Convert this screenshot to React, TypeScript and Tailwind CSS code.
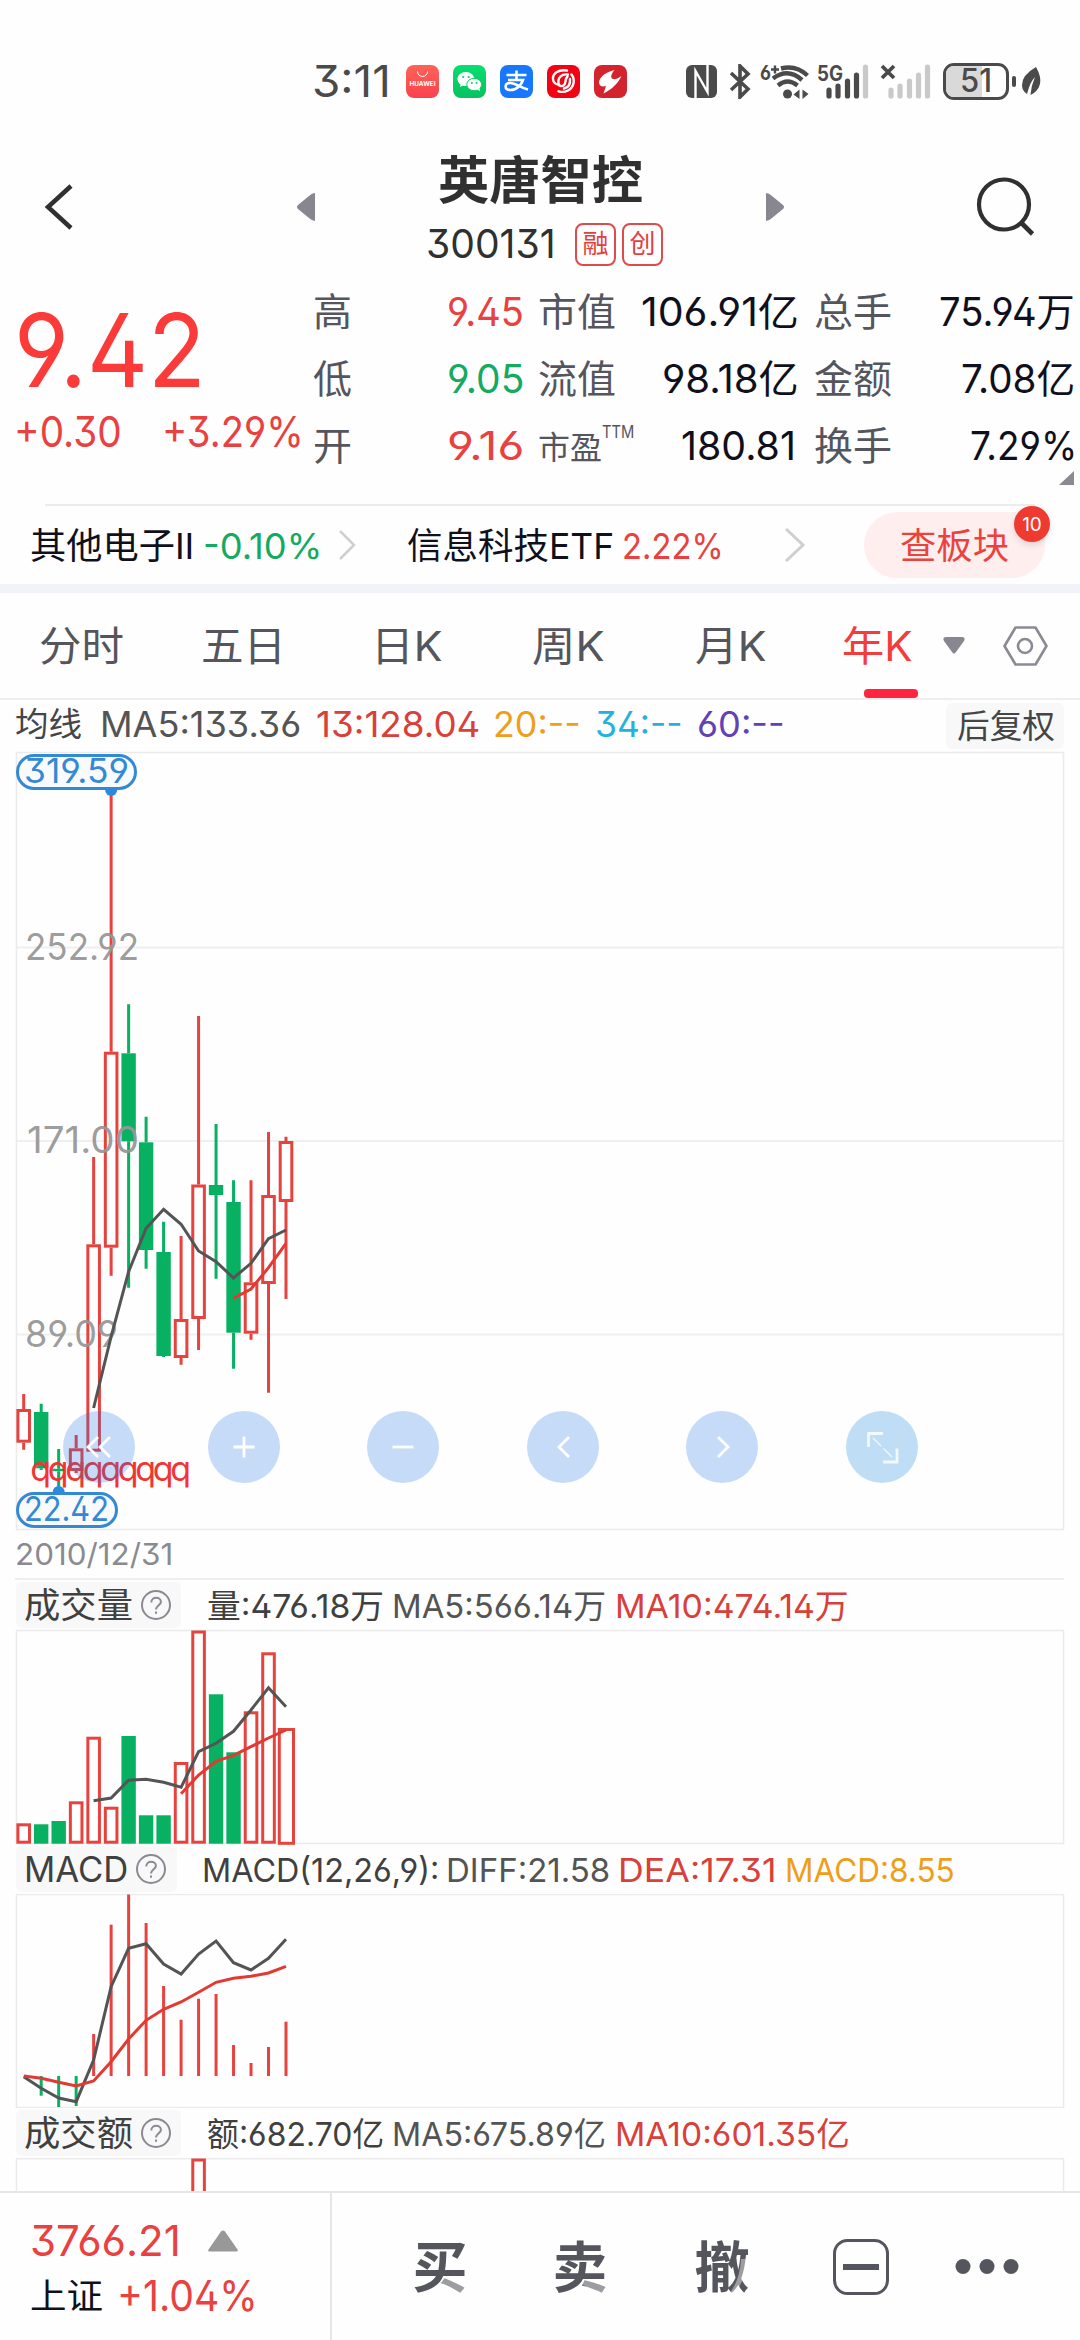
import { useLayoutEffect, useRef, useState } from "react";
import type { ReactNode } from "react";
import clsx from "clsx";

/* ---- Text that fills the width of its box ---- */

function Fit({ children, className }: { children: ReactNode; className?: string }) {
  const box = useRef<HTMLSpanElement>(null);
  const inner = useRef<HTMLSpanElement>(null);
  const [scale, setScale] = useState(1);

  useLayoutEffect(() => {
    if (!box.current || !inner.current) return;
    setScale(box.current.clientWidth / inner.current.offsetWidth);
  }, [children]);

  return (
    <span ref={box} className={clsx("block shrink-0", className)}>
      <span
        ref={inner}
        className="inline-block origin-left whitespace-nowrap align-top"
        style={{ transform: `scaleX(${scale})` }}
      >
        {children}
      </span>
    </span>
  );
}

/* ---- Chart data (one entry per year) ---- */

const RED = "#e6433f";
const GREEN = "#08b062";
const DARK = "#545454";

const cx = (i: number) => 23.7 + i * 17.487;

const line = (ys: number[], start: number) =>
  ys.map((y, i) => `${cx(start + i).toFixed(1)},${y}`).join(" ");

type Candle = { up: boolean; high: number; top: number; bottom: number; low: number };

const CANDLES: Candle[] = [
  { up: true, high: 1394, top: 1409, bottom: 1442.7, low: 1449.7 },
  { up: false, high: 1403.7, top: 1412, bottom: 1468.3, low: 1470 },
  { up: false, high: 1449, top: 1468.8, bottom: 1471.2, low: 1490 },
  { up: true, high: 1435, top: 1448.3, bottom: 1471, low: 1473 },
  { up: true, high: 1157, top: 1244.3, bottom: 1451.7, low: 1451.7 },
  { up: true, high: 788, top: 1051.7, bottom: 1247.7, low: 1275.7 },
  { up: false, high: 1004.3, top: 1053.3, bottom: 1141.3, low: 1287.7 },
  { up: false, high: 1116.7, top: 1142.3, bottom: 1250, low: 1268.7 },
  { up: false, high: 1221.7, top: 1252, bottom: 1356, low: 1357 },
  { up: true, high: 1236, top: 1319, bottom: 1358, low: 1364.7 },
  { up: true, high: 1016, top: 1184.5, bottom: 1319, low: 1350 },
  { up: false, high: 1124, top: 1185, bottom: 1195, low: 1278.7 },
  { up: false, high: 1180.3, top: 1202, bottom: 1332.7, low: 1368.7 },
  { up: true, high: 1180.3, top: 1282.3, bottom: 1333.7, low: 1339.7 },
  { up: true, high: 1132, top: 1195, bottom: 1284, low: 1392.7 },
  { up: true, high: 1136.7, top: 1141, bottom: 1202, low: 1299 },
];

const MA5 = [1408, 1336.7, 1271.7, 1228.3, 1209.3, 1224.3, 1251, 1261.7, 1278, 1263.3, 1238.7, 1230];
const MA13 = [1298.3, 1289, 1267.7, 1243.3];

const VOLUME_TOPS = [
  1823.3, 1824.3, 1821, 1801.3, 1736.7, 1806.7, 1736, 1815.3, 1815.3, 1762, 1630.5, 1694.3,
  1752.3, 1711.3, 1652.3, 1728,
];
const VOLUME_DOWN = [1, 2, 6, 7, 8, 11, 12];
const VOL_MA5 = [
  1800.7, 1798, 1780.3, 1779.3, 1782.3, 1787.3, 1751.7, 1743.3, 1731.3, 1710, 1687.7, 1706.7,
];
const VOL_MA10 = [1793.7, 1775, 1761.3, 1755.3, 1746.7, 1738, 1730];

const MACD_ZERO = 2076;
const MACD_HIST = [
  2076, 2095.7, 2107, 2106, 2034, 1924.7, 1894.5, 1923, 1986, 2019.7, 1998.7, 1994, 2045, 2063,
  2047, 2021.7,
];
const DIFF = [
  2076.7, 2088.3, 2098, 2101.7, 2060, 1986.7, 1948.3, 1943.7, 1964, 1974, 1954, 1941, 1962.7,
  1970, 1958.3, 1939.3,
];
const DEA = [
  2076, 2078.3, 2082.3, 2086, 2081, 2061.7, 2039, 2020.3, 2009.3, 2002, 1992.3, 1982.3, 1978.3,
  1976.3, 1973, 1966.3,
];

/* ---- Status bar ---- */

function AppBadge({ className, children }: { className: string; children: ReactNode }) {
  return (
    <span className={clsx("block h-[33px] w-[33px] shrink-0 overflow-hidden rounded-[8px]", className)}>
      <svg viewBox="0 0 33 33" className="h-full w-full">
        {children}
      </svg>
    </span>
  );
}

function StatusBar() {
  return (
    <div className="flex h-[120px] items-center pt-[42px] text-[#4a4a4a]">
      <Fit className="ml-[312px] w-[79px] text-[44px] leading-[48px]">3:11</Fit>
      <div className="ml-[15px] flex gap-[14px]">
        <AppBadge className="bg-linear-to-b from-[#ff6257] to-[#f9414f]">
          <path d="M11.5 6.5a5 5 0 0 0 10 0" fill="none" stroke="#fff" strokeWidth="1" />
          <text x="3.5" y="21" fontSize="6.3" fontWeight="700" textLength="26" lengthAdjust="spacingAndGlyphs" fill="#fff">
            HUAWEI
          </text>
        </AppBadge>
        <AppBadge className="bg-linear-to-b from-[#05e06f] to-[#07c160]">
          <path d="M13 7.200c-4.800 0-8.500 3-8.500 6.900 0 2.200 1.200 4.100 3.100 5.400l-.6 2.600 3-1.500c1 .3 2 .4 3 .4z" fill="#fff" />
          <ellipse cx="13" cy="14" rx="8.300" ry="6.900" fill="#fff" />
          <ellipse cx="21.200" cy="19.500" rx="7.400" ry="6.200" fill="#fff" stroke="#06cf68" strokeWidth="1" />
          <path d="M24 24l3 2.200-.6-3.200z" fill="#fff" />
          <circle cx="10.200" cy="12" r="1.100" fill="#06cf68" />
          <circle cx="15.700" cy="12" r="1.100" fill="#06cf68" />
          <circle cx="18.800" cy="18" r="1" fill="#06cf68" />
          <circle cx="23.600" cy="18" r="1" fill="#06cf68" />
        </AppBadge>
        <AppBadge className="bg-[#1778fe]">
          <path
            d="M6.500 10h20M16.500 5.500v9.500M8 15h15c-1.500 4.500-6 10-12.500 10-6.500 0-6.500-7 0-7 5.500 0 9 4.500 17.500 6.500"
            fill="none"
            stroke="#fff"
            strokeWidth="2.600"
          />
        </AppBadge>
        <AppBadge className="bg-[#f20313]">
          <path
            d="M20 5.500C11 4 5.500 9 6 14c.3 3 2 5 5 5.500M24.500 9.500c4 5 2.500 13-3.500 16-3 1.500-6.500 1.700-9.500.8M21 9.500c-6-1-10.500 3-9.500 9 .5 3 4 3.500 6 1 1.500-2 .5-6 3-8M23 14c.5 5-1.500 8.500-6 9.500"
            fill="none"
            stroke="#fff"
            strokeWidth="2.400"
            strokeLinecap="round"
          />
        </AppBadge>
        <AppBadge className="bg-[#d2232e]">
          <path d="M20.500 5C9 8 3.500 14.500 5.500 19.500c1 2 3.500 2.300 6.500 1.500L9.500 28.500C17 25 24 18.500 27.500 11c-3 2.500-6 3.500-8.500 3-3-.7-2-5 1.500-9z" fill="#fff" />
        </AppBadge>
      </div>

      {/* NFC, bluetooth, wifi */}
      <svg viewBox="0 0 31 33" className="ml-[59px] h-[33px] w-[31px] shrink-0">
        <rect width="31" height="33" rx="6" fill="currentColor" />
        <path d="M9.500 33V6L21.500 27V0" stroke="#fff" strokeWidth="2.400" fill="none" />
      </svg>
      <svg viewBox="0 0 22 35" className="ml-[12px] h-[35px] w-[22px] shrink-0">
        <path d="M2 9l17 16-8 8V2l8 8L2 26" fill="none" stroke="currentColor" strokeWidth="3.600" />
      </svg>
      <svg viewBox="0 0 48 37" className="ml-[10px] h-[37px] w-[48px] shrink-0 overflow-visible">
        <text x="-1" y="17" fontSize="20" fontWeight="700" fill="currentColor" textLength="11" lengthAdjust="spacingAndGlyphs">
          6
        </text>
        <path d="M10 6.500h8M14 2.500v8" stroke="currentColor" strokeWidth="2.400" />
        <path d="M20 5.500q15-4 26.500 7M12 15.500q15-11 29 1.500M17 22.500q9.500-8 19.500 0" fill="none" stroke="currentColor" strokeWidth="4.400" />
        <circle cx="26.500" cy="31" r="4.500" fill="currentColor" />
        <path d="M32.500 31.500l6-5v9.500M47.500 31l-6 5V26.500" fill="currentColor" />
      </svg>

      {/* Signal bars */}
      <svg viewBox="0 0 51 37" className="ml-[9px] h-[37px] w-[51px] shrink-0 overflow-visible">
        <text x="-1" y="18" fontSize="21" fontWeight="700" fill="currentColor" textLength="26" lengthAdjust="spacingAndGlyphs">
          5G
        </text>
        <path d="M11 27v6M20 23v10M29.500 18v15M38.500 12v21" stroke="currentColor" strokeWidth="5.200" strokeLinecap="round" />
        <path d="M47.500 4v29" stroke="#c9c9c9" strokeWidth="5.200" strokeLinecap="round" />
      </svg>
      <svg viewBox="0 0 51 37" className="ml-[11px] h-[37px] w-[51px] shrink-0">
        <path d="M2 3l12 12M14 3L2 15" stroke="currentColor" strokeWidth="3.800" />
        <path d="M11 27v6M20 23v10M29.500 18v15M38.500 12v21M47.500 4v29" stroke="#c9c9c9" strokeWidth="5.200" strokeLinecap="round" />
      </svg>

      {/* Battery */}
      <div className="relative ml-[12px] flex h-[37px] w-[66px] shrink-0 items-center justify-center overflow-hidden rounded-[11px] border-[3px] border-[#4a4a4a]">
        <div className="absolute inset-y-0 left-0 w-[36px] bg-[#d9d9d9]" />
        <Fit className="relative w-[32px] text-[32px] font-medium leading-[34px]">51</Fit>
      </div>
      <div className="ml-[3px] h-[11px] w-[4px] shrink-0 rounded-full bg-[#4a4a4a]" />
      <svg viewBox="0 0 20 28" className="ml-[6px] h-[28px] w-[20px] shrink-0">
        <path d="M14 0Q0 8 0 18q0 6 5 9Q8 15 13 10q-4 9-4.500 18Q20 22 18 10 17 5 14 0z" fill="currentColor" />
      </svg>
    </div>
  );
}

/* ---- Title ---- */

function Header() {
  return (
    <div className="flex h-[158px] items-center pt-[16px] text-[#303030]">
      <svg viewBox="0 0 30 46" className="ml-[44px] h-[46px] w-[30px] shrink-0">
        <path d="M27 2L4 23l23 21" fill="none" stroke="currentColor" strokeWidth="4.500" />
      </svg>
      <svg viewBox="0 0 20 28" className="ml-[222px] h-[28px] w-[20px] shrink-0">
        <path d="M19 0v28Q16 28 13 25L2 16q-2-2 0-4L13 3q3-3 6-3z" fill="#88878f" />
      </svg>
      <div className="ml-[113px] w-[234px] self-start">
        <Fit className="ml-[9px] mt-[15px] w-[205px] text-[51px] font-bold leading-[60px]">英唐智控</Fit>
        <div className="mt-[11px] flex h-[44px] items-center">
          <Fit className="ml-[-3px] w-[130px] text-[40px] leading-[44px]">300131</Fit>
          <div className="ml-[19px] flex gap-[6px] text-[26px] leading-[26px] text-[#e2403f]">
            <span className="flex h-[43px] w-[41px] items-center justify-center rounded-[8px] border-2 border-[#df4a4a]">融</span>
            <span className="flex h-[43px] w-[41px] items-center justify-center rounded-[8px] border-2 border-[#df4a4a]">创</span>
          </div>
        </div>
      </div>
      <svg viewBox="0 0 20 28" className="ml-[102px] h-[28px] w-[20px] shrink-0">
        <path d="M1 0v28q3 0 6-3l11-9q2-2 0-4L7 3Q4 0 1 0z" fill="#88878f" />
      </svg>
      <svg viewBox="0 0 60 60" className="ml-[191px] h-[60px] w-[60px] shrink-0">
        <circle cx="28" cy="27.500" r="25" fill="none" stroke="currentColor" strokeWidth="4.200" />
        <path d="M44.500 45l12 12" stroke="currentColor" strokeWidth="4.600" />
      </svg>
    </div>
  );
}

/* ---- Quote ---- */

function Quote() {
  return (
    <div className="relative flex h-[226px]">
      <div className="w-[305px] shrink-0 text-[#e8413f]">
        <Fit className="ml-[14px] mt-[17px] w-[192px] text-[102px] leading-[110px] text-[#fb3b39]">9.42</Fit>
        <div className="mt-[2px] flex text-[42px] leading-[50px]">
          <Fit className="ml-[14px] w-[108px]">+0.30</Fit>
          <Fit className="ml-[40px] w-[142px]">+3.29%</Fit>
        </div>
      </div>

      <div className="text-[39px] leading-[67px] text-[#10101c]">
        <div className="flex pl-[8px]">
          <Fit className="w-[39px] text-[#55555d]">高</Fit>
          <div className="flex w-[172px] justify-end text-[#e8413f]"><Fit className="w-[77px]">9.45</Fit></div>
          <Fit className="ml-[14px] w-[78px] text-[#55555d]">市值</Fit>
          <div className="flex w-[183px] justify-end"><Fit className="w-[158px]">106.91亿</Fit></div>
          <Fit className="ml-[15px] w-[78px] text-[#55555d]">总手</Fit>
          <div className="flex w-[183px] justify-end"><Fit className="w-[136px]">75.94万</Fit></div>
        </div>
        <div className="flex pl-[8px]">
          <Fit className="w-[39px] text-[#55555d]">低</Fit>
          <div className="flex w-[172px] justify-end text-[#14aa62]"><Fit className="w-[77px]">9.05</Fit></div>
          <Fit className="ml-[14px] w-[78px] text-[#55555d]">流值</Fit>
          <div className="flex w-[183px] justify-end"><Fit className="w-[137px]">98.18亿</Fit></div>
          <Fit className="ml-[15px] w-[78px] text-[#55555d]">金额</Fit>
          <div className="flex w-[183px] justify-end"><Fit className="w-[114px]">7.08亿</Fit></div>
        </div>
        <div className="flex pl-[8px]">
          <Fit className="w-[39px] text-[#55555d]">开</Fit>
          <div className="flex w-[172px] justify-end text-[#e8413f]"><Fit className="w-[77px]">9.16</Fit></div>
          <div className="ml-[14px] flex w-[98px] text-[#55555d]">
            <Fit className="w-[64px] pt-[2px] text-[32px]">市盈</Fit>
            <Fit className="-mt-[13px] w-[32px] text-[17px]">TTM</Fit>
          </div>
          <div className="flex w-[160px] justify-end"><Fit className="w-[115px]">180.81</Fit></div>
          <Fit className="ml-[18px] w-[78px] text-[#55555d]">换手</Fit>
          <div className="flex w-[185px] justify-end"><Fit className="w-[107px]">7.29%</Fit></div>
        </div>
      </div>

      <svg viewBox="0 0 15 14" className="absolute right-[6px] top-[193px] h-[14px] w-[15px]">
        <path d="M15 0v14H0z" fill="#8b8a92" />
      </svg>
    </div>
  );
}

function Boards() {
  return (
    <>
      <div className="mx-[45px] h-[2px] bg-[#ececec]" />
      <div className="flex h-[78px] items-center text-[36px] leading-[44px] text-[#10101c]">
        <Fit className="ml-[30px] w-[164px] pt-[2px]">其他电子II</Fit>
        <Fit className="ml-[9px] w-[119px] pt-[2px] text-[#14aa62]">-0.10%</Fit>
        <svg viewBox="0 0 17 30" className="ml-[17px] h-[30px] w-[17px] shrink-0">
          <path d="M1 1l14 14L1 29" fill="none" stroke="#cfcfcf" strokeWidth="2.500" />
        </svg>
        <Fit className="ml-[51px] w-[207px] pt-[2px]">信息科技ETF</Fit>
        <Fit className="ml-[8px] w-[102px] pt-[2px] text-[#e8413f]">2.22%</Fit>
        <svg viewBox="0 0 21 34" className="ml-[61px] h-[34px] w-[21px] shrink-0">
          <path d="M1 1l17 16L1 33" fill="none" stroke="#cfcfcf" strokeWidth="3" />
        </svg>
        <div className="relative ml-[58px] flex h-[66px] w-[181px] shrink-0 items-center justify-center rounded-full bg-[#ffeeee] text-[#ec423e]">
          <Fit className="w-[109px] pt-[1px]">查板块</Fit>
          <span className="absolute -top-[6px] left-[150px] flex h-[36px] w-[36px] items-center justify-center rounded-full bg-[#ee3a30] text-[19px] leading-none text-white shadow-[0_3px_6px_rgba(0,0,0,0.12)]">
            10
          </span>
        </div>
      </div>
      <div className="h-[9px] bg-[#f1f3f9]" />
    </>
  );
}

/* ---- Period tabs ---- */

const TABS = [
  { label: "分时", cls: "ml-[39px] w-[85px]" },
  { label: "五日", cls: "ml-[77px] w-[85px]" },
  { label: "日K", cls: "ml-[85px] w-[72px]" },
  { label: "周K", cls: "ml-[89px] w-[73px]" },
  { label: "月K", cls: "ml-[90px] w-[72px]" },
  { label: "年K", cls: "ml-[75px] w-[71px]", active: true },
];

function Tabs() {
  return (
    <div className="flex h-[107px] items-center border-b-2 border-[#eeeeee] text-[41px] leading-[107px] text-[#55555d]">
      {TABS.map((t) => (
        <div key={t.label} className={clsx("relative h-[105px] shrink-0", t.cls, t.active && "text-[#f43c3a]")}>
          <Fit className="w-full">{t.label}</Fit>
          {t.active && <div className="absolute bottom-0 left-[22px] h-[9px] w-[54px] rounded-[4px] bg-[#ff2540]" />}
        </div>
      ))}
      <svg viewBox="0 0 22 17" className="ml-[30px] h-[17px] w-[22px] shrink-0">
        <path d="M3 0h16q4 0 2 4l-8 11q-2 3-4 0L1 4q-2-4 2-4z" fill="#88878f" />
      </svg>
      <svg viewBox="0 0 45 40" className="ml-[38px] h-[40px] w-[45px] shrink-0">
        <path d="M12.500 1.500h20L43.500 20l-11 18.500h-20L1.500 20z" fill="none" stroke="#8b8a92" strokeWidth="2.600" strokeLinejoin="round" />
        <circle cx="22" cy="20" r="7" fill="none" stroke="#8b8a92" strokeWidth="2.600" />
      </svg>
    </div>
  );
}

function Averages() {
  return (
    <div className="flex h-[52px] items-center text-[35px] leading-[44px]">
      <div className="flex pb-[4px]">
        <Fit className="ml-[15px] w-[67px] text-[33px] text-[#454545]">均线</Fit>
        <Fit className="ml-[18px] w-[201px] text-[#545454]">MA5:133.36</Fit>
        <Fit className="ml-[15px] w-[164px] text-[#d8403a]">13:128.04</Fit>
        <Fit className="ml-[13px] w-[88px] text-[#ed9f1c]">20:--</Fit>
        <Fit className="ml-[14px] w-[88px] text-[#22b2dc]">34:--</Fit>
        <Fit className="ml-[14px] w-[88px] text-[#6440b5]">60:--</Fit>
      </div>
      <div className="ml-[161px] flex h-[46px] w-[118px] items-center justify-center rounded-[6px] bg-[#f8f8f8] text-[33px] text-[#454545]">
        <Fit className="ml-[1px] w-[98px]">后复权</Fit>
      </div>
    </div>
  );
}

/* ---- Candlestick chart ---- */

function RoundButton({ className, children }: { className?: string; children: ReactNode }) {
  return (
    <button className={clsx("h-[72px] w-[72px] shrink-0 rounded-full", className)}>
      <svg viewBox="-36 -36 72 72" fill="none" stroke="#fff" strokeWidth="2.800" className="h-full w-full">
        {children}
      </svg>
    </button>
  );
}

function KLine() {
  return (
    <div className="relative h-[778px]">
      <svg viewBox="0 752 1080 778" className="block h-[778px] w-full overflow-visible">
        <rect x="16.500" y="752.500" width="1047" height="777" fill="none" stroke="#ebebeb" strokeWidth="1.500" />
        <path d="M17 947.500H1063M17 1141H1063M17 1334.500H1063" stroke="#efefef" strokeWidth="2" />

        {CANDLES.map((c, i) => {
          const x = cx(i);
          const color = c.up ? RED : GREEN;
          return (
            <g key={i} stroke={color} strokeWidth="3">
              <path d={`M${x} ${c.high}V${c.top}M${x} ${c.bottom}V${c.low}`} />
              {c.up ? (
                <rect x={x - 5.8} y={c.top + 1.5} width="11.600" height={c.bottom - c.top - 3} fill="none" />
              ) : (
                <rect x={x - 7.2} y={c.top} width="14.400" height={c.bottom - c.top} fill={color} stroke="none" />
              )}
            </g>
          );
        })}

        <g fontSize="37" fill="#979797" fillOpacity="0.950">
          <text x="25" y="960" textLength="114" lengthAdjust="spacingAndGlyphs">252.92</text>
          <text x="27" y="1153" textLength="112" lengthAdjust="spacingAndGlyphs">171.00</text>
          <text x="25" y="1347" textLength="93" lengthAdjust="spacingAndGlyphs">89.09</text>
        </g>

        <polyline points={line(MA5, 4)} fill="none" stroke={DARK} strokeWidth="3" />
        <polyline points={line(MA13, 12)} fill="none" stroke="#e23a33" strokeWidth="3" />

        <g fontSize="34" fill="#f13535" textAnchor="middle">
          {[1, 2, 3, 4, 5, 6, 7, 8, 9].map((i) => (
            <text key={i} x={cx(i) - 0.5} y="1481">q</text>
          ))}
        </g>

        <g fill="#2b8ade">
          <circle cx={cx(5)} cy="790" r="6" />
          <circle cx={cx(2)} cy="1492" r="6" />
        </g>
        <g fill="#f8fafc" stroke="#3489d4" strokeWidth="3">
          <rect x="17.500" y="755.500" width="118" height="33" rx="16.500" />
          <rect x="17.500" y="1493.500" width="99" height="33" rx="16.500" />
        </g>
        <g fontSize="34" fill="#3489d4">
          <text x="24" y="783.300" textLength="105" lengthAdjust="spacingAndGlyphs">319.59</text>
          <text x="24" y="1521" textLength="85" lengthAdjust="spacingAndGlyphs">22.42</text>
        </g>
      </svg>

      <div className="absolute left-[63px] top-[659px] flex">
        <RoundButton className="bg-[#1f72e7]/25">
          <path d="M-1-10L-11 0-1 10M11-10L1 0l10 10" />
        </RoundButton>
        <RoundButton className="ml-[73px] bg-[#1f72e7]/25">
          <path d="M-10.500 0h21M0-10.500v21" />
        </RoundButton>
        <RoundButton className="ml-[87px] bg-[#1f72e7]/25">
          <path d="M-10.500 0h21" />
        </RoundButton>
        <RoundButton className="ml-[88px] bg-[#1f72e7]/25">
          <path d="M6-10L-4 0 6 10" />
        </RoundButton>
        <RoundButton className="ml-[87px] bg-[#1f72e7]/25">
          <path d="M-4-10L6 0-4 10" />
        </RoundButton>
        <RoundButton className="ml-[88px] bg-[#0480dc]/25">
          <g strokeOpacity="0.800">
            <path d="M1-13.500h-14.500V0M15 1.500V15H1" />
            <path d="M-9-9l8 8M1.500 1.500L10 10" strokeWidth="1.300" />
          </g>
        </RoundButton>
      </div>
    </div>
  );
}

/* ---- Indicator panels ---- */

function HelpIcon({ className }: { className?: string }) {
  return (
    <svg viewBox="0 0 30 30" fill="none" stroke="#8b8a92" strokeWidth="2" className={clsx("h-[30px] w-[30px] shrink-0", className)}>
      <circle cx="15" cy="15" r="14" />
      <path d="M10.300 12.500c0-6.500 9.600-6 9.600-.5 0 3-4.900 3.500-4.900 7.500" />
      <path d="M15 21.500v2.200" />
    </svg>
  );
}

function PanelHeader({
  title,
  chip,
  titleWidth,
  items,
}: {
  title: string;
  chip: string;
  titleWidth: string;
  items: { text: string; cls: string }[];
}) {
  return (
    <div className="flex h-[50px] items-center text-[33px] leading-[44px]">
      <div className={clsx("ml-[16px] flex h-[46px] shrink-0 items-center rounded-[6px] bg-[#f8f8f8] pl-[8px] text-[#404040]", chip)}>
        <Fit className={clsx("text-[35px]", titleWidth)}>{title}</Fit>
        <HelpIcon className="ml-[8px]" />
      </div>
      {items.map((it) => (
        <Fit key={it.text} className={clsx("pt-[2px]", it.cls)}>{it.text}</Fit>
      ))}
    </div>
  );
}

function Panels() {
  return (
    <>
      <PanelHeader
        title="成交量"
        chip="w-[165px]"
        titleWidth="w-[109px]"
        items={[
          { text: "量:476.18万", cls: "ml-[26px] w-[177px] text-[#404040]" },
          { text: "MA5:566.14万", cls: "ml-[8px] w-[214px] text-[#545454]" },
          { text: "MA10:474.14万", cls: "ml-[9px] w-[234px] text-[#d8403a]" },
        ]}
      />
      <svg viewBox="0 1630 1080 214" className="block h-[214px] w-full overflow-visible">
        <rect x="16.500" y="1630.500" width="1047" height="213" fill="none" stroke="#ebebeb" strokeWidth="1.500" />
        {VOLUME_TOPS.map((top, i) => {
          const last = i === VOLUME_TOPS.length - 1;
          return VOLUME_DOWN.includes(i) ? (
            <rect key={i} x={cx(i) - 7.2} y={top} width="14.400" height={1843.7 - top} fill={GREEN} />
          ) : (
            <rect
              key={i}
              x={cx(i) - (last ? 6.7 : 5.8)}
              y={top + 1.5}
              width={last ? 14.2 : 11.6}
              height={(last ? 1844.8 : 1843.7) - top - 3}
              fill="none"
              stroke={RED}
              strokeWidth="3"
            />
          );
        })}
        <polyline points={line(VOL_MA5, 4)} fill="none" stroke={DARK} strokeWidth="3" />
        <polyline points={line(VOL_MA10, 9)} fill="none" stroke="#e23a33" strokeWidth="3" />
      </svg>

      <PanelHeader
        title="MACD"
        chip="w-[161px]"
        titleWidth="w-[104px]"
        items={[
          { text: "MACD(12,26,9):", cls: "ml-[25px] w-[237px] text-[#404040]" },
          { text: "DIFF:21.58", cls: "ml-[7px] w-[164px] text-[#545454]" },
          { text: "DEA:17.31", cls: "ml-[8px] w-[158px] text-[#d8403a]" },
          { text: "MACD:8.55", cls: "ml-[9px] w-[170px] text-[#ed9f1c]" },
        ]}
      />
      <svg viewBox="0 1894 1080 214" className="block h-[214px] w-full">
        <rect x="16.500" y="1894.500" width="1047" height="213" fill="none" stroke="#ebebeb" strokeWidth="1.500" />
        {MACD_HIST.map((y, i) => (
          <path key={i} d={`M${cx(i)} ${MACD_ZERO}V${y}`} stroke={y > MACD_ZERO ? GREEN : RED} strokeWidth="3" />
        ))}
        <polyline points={line(DIFF, 0)} fill="none" stroke={DARK} strokeWidth="3" />
        <polyline points={line(DEA, 0)} fill="none" stroke="#e23a33" strokeWidth="3" />
      </svg>

      <PanelHeader
        title="成交额"
        chip="w-[165px]"
        titleWidth="w-[109px]"
        items={[
          { text: "额:682.70亿", cls: "ml-[26px] w-[177px] text-[#404040]" },
          { text: "MA5:675.89亿", cls: "ml-[8px] w-[214px] text-[#545454]" },
          { text: "MA10:601.35亿", cls: "ml-[9px] w-[235px] text-[#d8403a]" },
        ]}
      />
      <svg viewBox="0 2158 1080 33" className="block h-[33px] w-full">
        <path d="M16.500 2191V2158.700H1063.500V2191" fill="none" stroke="#ebebeb" strokeWidth="1.500" />
        <rect x={cx(10) - 5.8} y="2160" width="11.600" height="60" fill="none" stroke={RED} strokeWidth="3" />
      </svg>
    </>
  );
}

/* ---- Bottom bar ---- */

function TradeButton({ label, fade, className }: { label: string; fade: string; className: string }) {
  return (
    <button className={clsx("relative h-[60px] w-[56px] shrink-0 text-[55px] font-bold leading-[60px]", className)}>
      {label}
      <svg viewBox="0 0 56 60" className="absolute inset-0 h-full w-full">
        <path d={fade} fill="#fff" fillOpacity="0.420" />
      </svg>
    </button>
  );
}

function BottomBar() {
  return (
    <div className="flex h-[149px] border-t-2 border-[#e6e6e6] text-[#55555d]">
      <div className="w-[332px] shrink-0 border-r-2 border-[#e6e6e6] text-[42px] leading-[50px] text-[#e8413f]">
        <div className="mt-[23px] flex items-center">
          <Fit className="ml-[30px] w-[151px]">3766.21</Fit>
          <svg viewBox="0 0 30 22" className="ml-[27px] h-[22px] w-[30px]">
            <path d="M13 1.500q2-2 4 0l12.500 18q1 2-1 2h-27q-2 0-1-2z" fill="#989898" />
          </svg>
        </div>
        <div className="mt-[5px] flex items-center">
          <Fit className="ml-[30px] w-[73px] text-[35px] text-[#10101c]">上证</Fit>
          <Fit className="ml-[14px] w-[141px]">+1.04%</Fit>
        </div>
      </div>
      <div className="flex items-center">
        <TradeButton label="买" className="ml-[80px]" fade="M33 39l23 9v11H46L29 45z" />
        <TradeButton label="卖" className="ml-[84px]" fade="M34 42l22 8v9H47L30 47z" />
        <TradeButton label="撤" className="ml-[86px]" fade="M47 22h6q-1 20-12 34l-6 1q11-14 12-35z" />
        <svg viewBox="0 0 56 56" className="ml-[83px] h-[56px] w-[56px] shrink-0">
          <rect x="1.500" y="1.500" width="53" height="53" rx="13" fill="none" stroke="currentColor" strokeWidth="3" />
          <path d="M10 28h36" stroke="currentColor" strokeWidth="6" />
        </svg>
        <svg viewBox="0 0 64 16" className="ml-[66px] h-[16px] w-[64px] shrink-0">
          <circle cx="8" cy="7.500" r="7.500" fill="currentColor" />
          <circle cx="32" cy="7.500" r="7.500" fill="currentColor" />
          <circle cx="56" cy="7.500" r="7.500" fill="currentColor" />
        </svg>
      </div>
    </div>
  );
}

export default function App() {
  return (
    <div className="h-[2340px] w-[1080px] overflow-hidden bg-[#fefefe] [font-family:Inter,'Noto_Sans_CJK_SC',sans-serif] [font-feature-settings:'cv03','cv04','ss01']">
      <StatusBar />
      <Header />
      <Quote />
      <Boards />
      <Tabs />
      <Averages />
      <KLine />
      <div className="ml-[15px] mr-[16px] h-[50px] border-b-2 border-[#eeeeee] text-[30px] leading-[48px] text-[#8a8a90]">
        <Fit className="w-[158px]">2010/12/31</Fit>
      </div>
      <Panels />
      <BottomBar />
    </div>
  );
}
